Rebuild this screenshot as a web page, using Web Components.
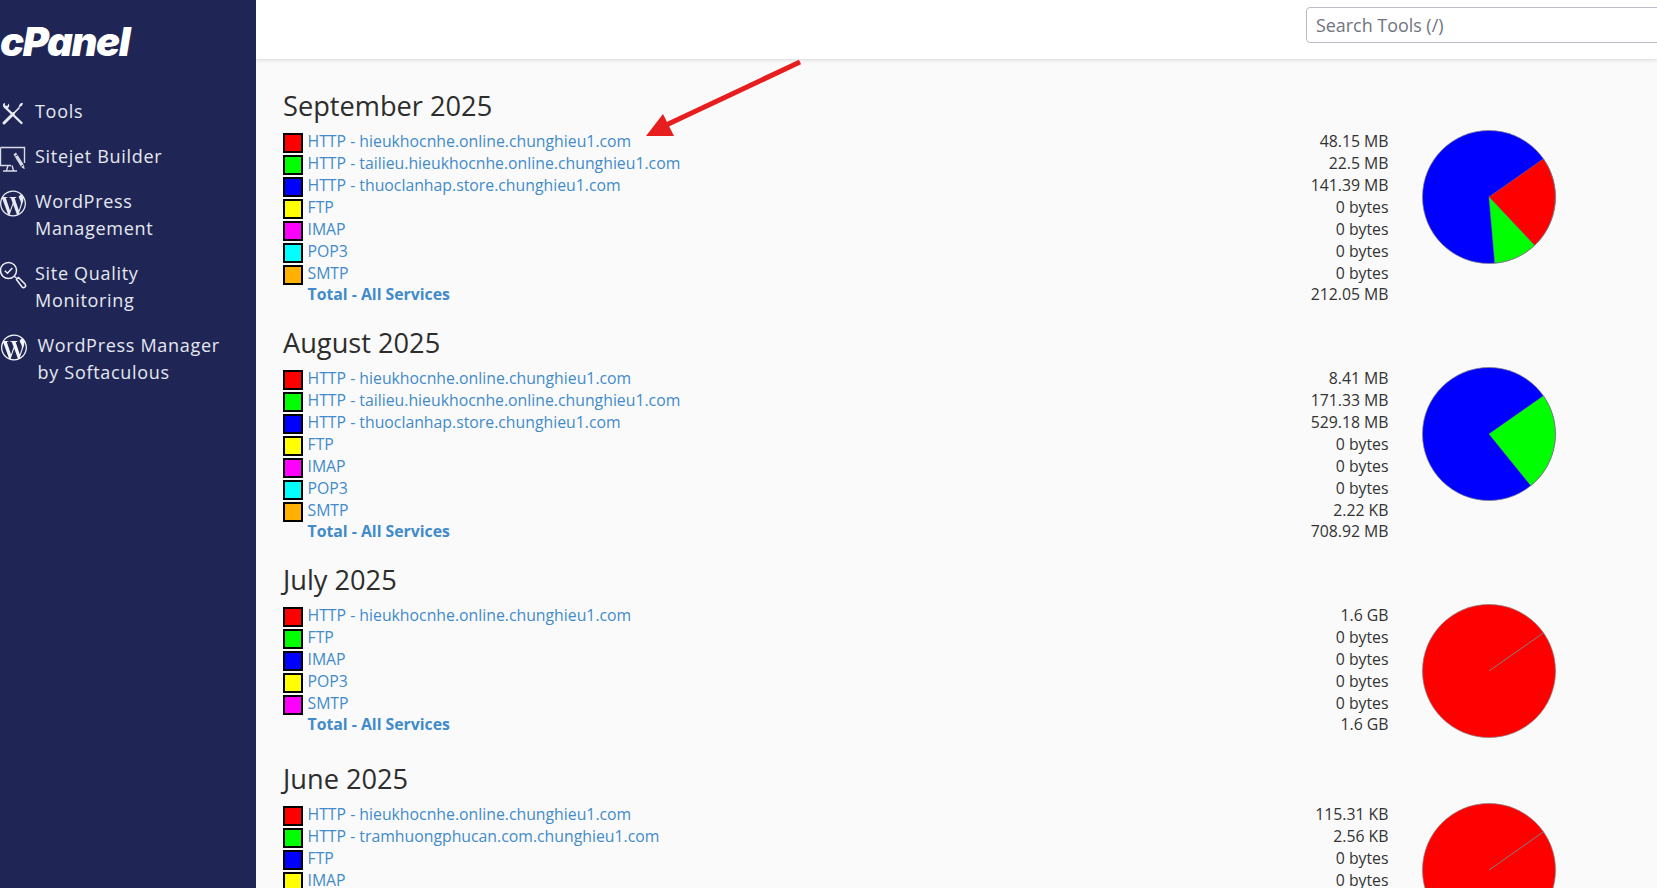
<!DOCTYPE html>
<html lang="en">
<head>
<meta charset="utf-8">
<title>Bandwidth</title>
<style>
 html, body {
  margin: 0;
  height: 100%;
  overflow: hidden;
  background: #fafafa;
 }
</style>
</head>
<body>
<cp-shell>
 <cp-sidebar slot="side">
  <cp-nav-item>
   <svg slot="icon" width="28" height="30" viewBox="0 0 28 30" fill="none" stroke="#e8eaf2">
    <path d="M5.500 9.500 21.500 25" stroke-width="2.400" stroke-linecap="round"/>
    <path d="M3 8c.6 2.600 3.600 3.400 5.300 1.800 1.300-1.300 1.200-3.200.2-4.300L7.400 8 5 7.400l-.2-2.600C3.400 5.300 2.700 6.500 3 8Z" fill="#e8eaf2" stroke="none"/>
    <path d="M4 25 13.500 15.500" stroke-width="3" stroke-linecap="round"/>
    <path d="M13.500 15.500 19.500 9.500" stroke-width="1.600"/>
    <path d="M18.500 9 20 5.800l2.300-1 .7.700-1 2.300-3.200 1.700Z" fill="#e8eaf2" stroke="none"/>
   </svg>
   Tools
  </cp-nav-item>
  <cp-nav-item>
   <svg slot="icon" width="28" height="30" viewBox="0 0 28 30" fill="none" stroke="#d8dbe6" stroke-width="1.400">
    <path d="M.5 4.500H24.500V20M11 22.500H.5V4.500"/>
    <path d="M8 22.500 6.500 27.500M12 22.500 13.500 27.500M3 28h14"/>
    <path d="M13.500 11.500 16 9.500l8 12.500.6 4.200-3.500-2.300Z" fill="#d8dbe6" stroke="none"/>
    <path d="M15.500 13 18 11.300M21 23.500l2.700-1.700" stroke="#1f2655" stroke-width="1"/>
   </svg>
   Sitejet Builder
  </cp-nav-item>
  <cp-nav-item>
   <svg slot="icon" width="26" height="27" viewBox="0 0 24 24" fill="#e8eaf2" style="margin-top:2.500px">
    <path d="M21.469 6.825c.84 1.537 1.318 3.3 1.318 5.175 0 3.979-2.156 7.456-5.363 9.325l3.295-9.527c.615-1.54.82-2.771.82-3.864 0-.405-.026-.78-.07-1.11m-7.981.105c.647-.03 1.232-.105 1.232-.105.582-.075.514-.93-.067-.899 0 0-1.755.135-2.88.135-1.064 0-2.85-.15-2.85-.15-.585-.03-.661.855-.075.885 0 0 .54.061 1.125.09l1.68 4.605-2.37 7.08L5.354 6.9c.649-.03 1.234-.1 1.234-.1.585-.075.516-.93-.065-.896 0 0-1.746.138-2.874.138-.2 0-.438-.008-.69-.015C4.911 3.15 8.235 1.215 12 1.215c2.809 0 5.365 1.072 7.286 2.833-.046-.003-.091-.009-.141-.009-1.06 0-1.812.923-1.812 1.914 0 .89.513 1.643 1.06 2.531.411.72.89 1.643.89 2.977 0 .915-.354 1.994-.821 3.479l-1.075 3.585-3.9-11.61.001.014zM12 22.784c-1.059 0-2.081-.153-3.048-.437l3.237-9.406 3.315 9.087c.024.053.05.101.078.149-1.12.393-2.325.609-3.582.609M1.211 12c0-1.564.336-3.05.935-4.39L7.29 21.709C3.694 19.96 1.212 16.271 1.211 12M12 0C5.385 0 0 5.385 0 12s5.385 12 12 12 12-5.385 12-12S18.615 0 12 0"/>
   </svg>
   WordPress<br>Management
  </cp-nav-item>
  <cp-nav-item>
   <svg slot="icon" width="28" height="30" viewBox="0 0 28 30" fill="none" stroke="#eef0f6" stroke-width="1.500">
    <circle cx="8.500" cy="10.500" r="8"/>
    <path d="M4.800 10.800 7.500 13.300 12.300 8"/>
    <path d="M14.500 16.500 17 18.500"/>
    <path d="M16.500 19.500 18.500 17.500 25 24c1 1.200.7 2.200 0 3-.9.800-2 .9-3 0Z"/>
   </svg>
   Site Quality<br>Monitoring
  </cp-nav-item>
  <cp-nav-item style="--icon-w: 37.500px">
   <svg slot="icon" width="26" height="27" viewBox="0 0 24 24" fill="#f4f5f9" style="margin:2.500px 0 0 1px">
    <path d="M21.469 6.825c.84 1.537 1.318 3.3 1.318 5.175 0 3.979-2.156 7.456-5.363 9.325l3.295-9.527c.615-1.54.82-2.771.82-3.864 0-.405-.026-.78-.07-1.11m-7.981.105c.647-.03 1.232-.105 1.232-.105.582-.075.514-.93-.067-.899 0 0-1.755.135-2.88.135-1.064 0-2.85-.15-2.85-.15-.585-.03-.661.855-.075.885 0 0 .54.061 1.125.09l1.68 4.605-2.37 7.08L5.354 6.9c.649-.03 1.234-.1 1.234-.1.585-.075.516-.93-.065-.896 0 0-1.746.138-2.874.138-.2 0-.438-.008-.69-.015C4.911 3.15 8.235 1.215 12 1.215c2.809 0 5.365 1.072 7.286 2.833-.046-.003-.091-.009-.141-.009-1.06 0-1.812.923-1.812 1.914 0 .89.513 1.643 1.06 2.531.411.72.89 1.643.89 2.977 0 .915-.354 1.994-.821 3.479l-1.075 3.585-3.9-11.61.001.014zM12 22.784c-1.059 0-2.081-.153-3.048-.437l3.237-9.406 3.315 9.087c.024.053.05.101.078.149-1.12.393-2.325.609-3.582.609M1.211 12c0-1.564.336-3.05.935-4.39L7.29 21.709C3.694 19.96 1.212 16.271 1.211 12M12 0C5.385 0 0 5.385 0 12s5.385 12 12 12 12-5.385 12-12S18.615 0 12 0"/>
   </svg>
   WordPress Manager<br>by Softaculous
  </cp-nav-item>
 </cp-sidebar>

 <cp-topbar slot="top"></cp-topbar>

 <cp-month name="September 2025" base="#0000ff" slices="#ff0000 -35 46.7,#00ff00 46.7 85">
  <cp-row color="#ff0000" value="48.15 MB">HTTP - hieukhocnhe.online.chunghieu1.com</cp-row>
  <cp-row color="#00ff00" value="22.5 MB">HTTP - tailieu.hieukhocnhe.online.chunghieu1.com</cp-row>
  <cp-row color="#0000ff" value="141.39 MB">HTTP - thuoclanhap.store.chunghieu1.com</cp-row>
  <cp-row color="#ffff00" value="0 bytes">FTP</cp-row>
  <cp-row color="#ff00ff" value="0 bytes">IMAP</cp-row>
  <cp-row color="#00ffff" value="0 bytes">POP3</cp-row>
  <cp-row color="#ffb000" value="0 bytes">SMTP</cp-row>
  <cp-row total value="212.05 MB">Total - All Services</cp-row>
 </cp-month>

 <cp-month name="August 2025" base="#0000ff" slices="#00ff00 -35 51">
  <cp-row color="#ff0000" value="8.41 MB">HTTP - hieukhocnhe.online.chunghieu1.com</cp-row>
  <cp-row color="#00ff00" value="171.33 MB">HTTP - tailieu.hieukhocnhe.online.chunghieu1.com</cp-row>
  <cp-row color="#0000ff" value="529.18 MB">HTTP - thuoclanhap.store.chunghieu1.com</cp-row>
  <cp-row color="#ffff00" value="0 bytes">FTP</cp-row>
  <cp-row color="#ff00ff" value="0 bytes">IMAP</cp-row>
  <cp-row color="#00ffff" value="0 bytes">POP3</cp-row>
  <cp-row color="#ffb000" value="2.22 KB">SMTP</cp-row>
  <cp-row total value="708.92 MB">Total - All Services</cp-row>
 </cp-month>

 <cp-month name="July 2025" base="#ff0000" seam>
  <cp-row color="#ff0000" value="1.6 GB">HTTP - hieukhocnhe.online.chunghieu1.com</cp-row>
  <cp-row color="#00ff00" value="0 bytes">FTP</cp-row>
  <cp-row color="#0000ff" value="0 bytes">IMAP</cp-row>
  <cp-row color="#ffff00" value="0 bytes">POP3</cp-row>
  <cp-row color="#ff00ff" value="0 bytes">SMTP</cp-row>
  <cp-row total value="1.6 GB">Total - All Services</cp-row>
 </cp-month>

 <cp-month name="June 2025" base="#ff0000" seam>
  <cp-row color="#ff0000" value="115.31 KB">HTTP - hieukhocnhe.online.chunghieu1.com</cp-row>
  <cp-row color="#00ff00" value="2.56 KB">HTTP - tramhuongphucan.com.chunghieu1.com</cp-row>
  <cp-row color="#0000ff" value="0 bytes">FTP</cp-row>
  <cp-row color="#ffff00" value="0 bytes">IMAP</cp-row>
 </cp-month>

 <!-- hand drawn annotation on the screenshot -->
 <svg slot="over" width="1657" height="888" viewBox="0 0 1657 888" fill="#e61e1e">
  <path d="M800 62 664 126" stroke="#e61e1e" stroke-width="5" stroke-linecap="butt"/>
  <path d="M646 136 663 114 674 136Z"/>
 </svg>
</cp-shell>

<script>
const FONT = "\"Open Sans\", \"Noto Sans\", sans-serif"

class CpShell extends HTMLElement {
 constructor() {
  super()
  this.attachShadow({ mode: "open" }).innerHTML = `<style>
   :host {
    display: grid;
    grid-template-columns: 256px 1fr;
    height: 888px;
    overflow: hidden;
    position: relative;
    font-family: ${FONT};
    color: #333;
   }
   main {
    min-width: 0;
    overflow: hidden;
   }
   #months {
    padding: 11px 101px 0 27px;
   }
   #over {
    position: absolute;
    inset: 0;
    pointer-events: none;
   }
  </style>
  <slot name="side"></slot>
  <main>
   <slot name="top"></slot>
   <div id="months"><slot></slot></div>
  </main>
  <div id="over"><slot name="over"></slot></div>`
 }
}

class CpSidebar extends HTMLElement {
 constructor() {
  super()
  this.attachShadow({ mode: "open" }).innerHTML = `<style>
   :host {
    display: block;
    background: #1f2655;
    overflow: hidden;
   }
   #logo {
    height: 88.5px;
    box-sizing: border-box;
    padding-top: 18px;
    font: italic 900 40px/48px Inter, sans-serif;
    letter-spacing: -1.400px;
    color: #fff;
    white-space: nowrap;
   }
  </style>
  <div id="logo">cPanel</div>
  <slot></slot>`
 }
}

class CpNavItem extends HTMLElement {
 constructor() {
  super()
  this.attachShadow({ mode: "open" }).innerHTML = `<style>
   :host {
    display: flex;
    padding: 9px 0;
    font-size: 18px;
    line-height: 27px;
    letter-spacing: .7px;
    color: #e6e8f0;
   }
   #icon {
    flex: none;
    width: var(--icon-w, 35px);
    height: 27px;
   }
  </style>
  <div id="icon"><slot name="icon"></slot></div>
  <div><slot></slot></div>`
 }
}

class CpTopbar extends HTMLElement {
 constructor() {
  super()
  this.attachShadow({ mode: "open" }).innerHTML = `<style>
   :host {
    display: block;
    position: relative;
    height: 59px;
    box-sizing: border-box;
    padding: 7px 0 0 1050px;
    background: #fff;
    box-shadow: 0 1px 4px rgba(0, 0, 0, .14);
   }
   input {
    display: block;
    width: 420px;
    height: 36px;
    box-sizing: border-box;
    padding: 0 9px;
    border: 1px solid #b9bccb;
    border-radius: 4px;
    font: 17.900px ${FONT};
    background: #fff;
   }
   input::placeholder {
    color: #6f7480;
    opacity: 1;
   }
  </style>
  <input type="text" placeholder="Search Tools (/)">`
 }
}

class CpMonth extends HTMLElement {
 constructor() {
  super()
  this.attachShadow({ mode: "open" }).innerHTML = `<style>
   :host {
    display: block;
   }
   h2 {
    margin: 17.500px 0 8.500px;
    font-size: 27.200px;
    font-weight: 400;
    line-height: 36px;
    color: #2d2d2d;
   }
   #body {
    display: flex;
    gap: 34.500px;
    align-items: flex-start;
    min-height: 137px;
   }
   #rows {
    flex: 1;
    min-width: 0;
   }
   cp-pie {
    margin-top: -1px;
   }
  </style>
  <h2></h2>
  <div id="body">
   <div id="rows"><slot></slot></div>
   <cp-pie></cp-pie>
  </div>`
 }

 connectedCallback() {
  this.shadowRoot.querySelector("h2").textContent =
   this.getAttribute("name")
  const pie = this.shadowRoot.querySelector("cp-pie")
  for (const a of ["base", "slices", "seam"]) {
   if (this.hasAttribute(a)) {
    pie.setAttribute(a, this.getAttribute(a))
   }
  }
  pie.draw()
 }
}

class CpRow extends HTMLElement {
 constructor() {
  super()
  this.attachShadow({ mode: "open" }).innerHTML = `<style>
   :host {
    display: flex;
    height: 22px;
    font-size: 15.800px;
    line-height: 18px;
   }
   :host([total]) {
    height: 21px;
    line-height: 17px;
   }
   #swatch {
    flex: none;
    width: 20px;
    height: 20px;
    margin: 1px 4.500px 0 0;
    box-sizing: border-box;
    border: 2px solid #000;
   }
   :host([total]) #swatch {
    visibility: hidden;
   }
   #label {
    flex: 1;
    color: #428bca;
   }
   :host([total]) #label {
    font-weight: 700;
   }
   #value {
    color: #333;
   }
  </style>
  <div id="swatch"></div>
  <div id="label"><slot></slot></div>
  <div id="value"></div>`
 }

 connectedCallback() {
  this.shadowRoot.querySelector("#value").textContent =
   this.getAttribute("value")
  this.shadowRoot.querySelector("#swatch").style.background =
   this.getAttribute("color") || "transparent"
 }
}

class CpPie extends HTMLElement {
 constructor() {
  super()
  this.attachShadow({ mode: "open" }).innerHTML = `<style>
   :host {
    display: block;
    flex: none;
    width: 133px;
    height: 133px;
   }
   svg {
    display: block;
    overflow: visible;
   }
  </style>
  <svg width="133" height="133" viewBox="0 0 133 133"></svg>`
 }

 /** angles are degrees, clockwise from 3 o'clock */
 draw() {
  const c = 66
  const r = 66.5
  const point = (deg) => {
   const a = deg * Math.PI / 180
   return `${c + r * Math.cos(a)} ${c + r * Math.sin(a)}`
  }
  let out = `<circle cx="${c}" cy="${c}" r="${r}"
   fill="${this.getAttribute("base")}"/>`
  const slices = this.getAttribute("slices")
  if (slices) {
   for (const s of slices.split(",")) {
    const [color, from, to] = s.split(" ")
    out += `<path d="M${c} ${c}L${point(+from)}
     A${r} ${r} 0 0 1 ${point(+to)}Z" fill="${color}"
     stroke="#808080" stroke-width=".5"/>`
   }
  }
  if (this.hasAttribute("seam")) {
   out += `<path d="M${c} ${c}L${point(-35)}"
    stroke="#808080" stroke-width="1"/>`
  }
  out += `<circle cx="${c}" cy="${c}" r="${r}" fill="none"
   stroke="#808080" stroke-width=".7"/>`
  this.shadowRoot.querySelector("svg").innerHTML = out
 }
}

customElements.define("cp-pie", CpPie)
customElements.define("cp-shell", CpShell)
customElements.define("cp-sidebar", CpSidebar)
customElements.define("cp-nav-item", CpNavItem)
customElements.define("cp-topbar", CpTopbar)
customElements.define("cp-month", CpMonth)
customElements.define("cp-row", CpRow)
</script>
</body>
</html>
